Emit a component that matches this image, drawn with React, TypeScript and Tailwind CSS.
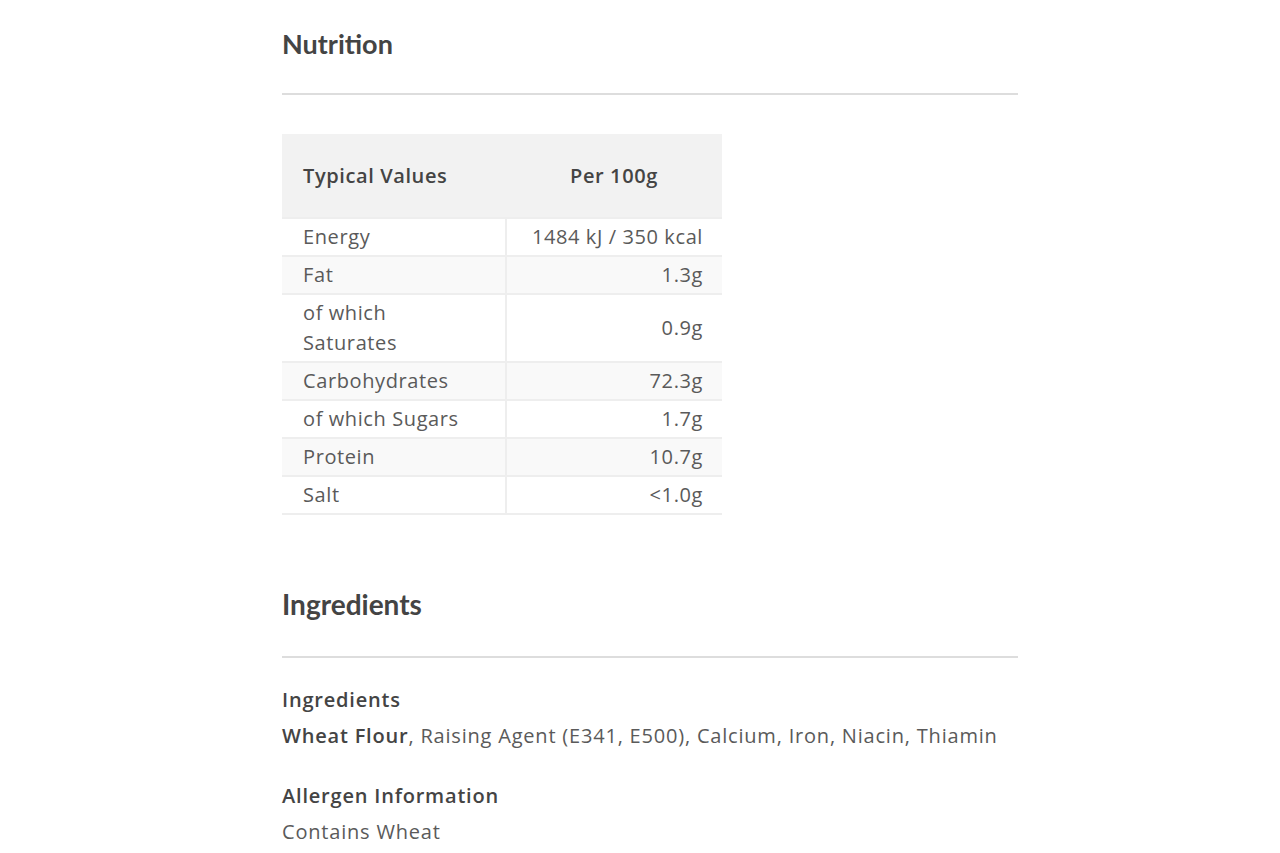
import React from "react";

const rows: { label: React.ReactNode; value: string; shade: boolean }[] = [
  { label: "Energy", value: "1484 kJ / 350 kcal", shade: false },
  { label: "Fat", value: "1.3g", shade: true },
  { label: <>of which<br />Saturates</>, value: "0.9g", shade: false },
  { label: "Carbohydrates", value: "72.3g", shade: true },
  { label: "of which Sugars", value: "1.7g", shade: false },
  { label: "Protein", value: "10.7g", shade: true },
  { label: "Salt", value: "<1.0g", shade: false },
];

export default function App() {
  return (
    <div className="min-h-[853px] bg-white">
      <div className="ml-[282px] w-[736px] pt-[26px]">
        <h2 className="font-['Lato',sans-serif] text-[27px] font-bold leading-[36px] text-[#444]">Nutrition</h2>
        <div className="mt-[31px] h-[2px] bg-[#dddddd]" />
        <table className="mt-[39px] w-[440px] table-fixed border-collapse font-['Open_Sans',sans-serif] text-[20px] tracking-[0.6px] text-[#5a5a5a]">
          <thead>
            <tr className="bg-[#f2f2f2]">
              <th className="h-[84px] w-[224px] pl-[21px] text-left text-[20px] font-semibold text-[#444]">Typical Values</th>
              <th className="text-center text-[20px] font-semibold text-[#444]">Per 100g</th>
            </tr>
          </thead>
          <tbody>
            {rows.map((r, i) => (
              <tr key={i} className={r.shade ? "bg-[#f9f9f9]" : "bg-white"}>
                <td className="whitespace-nowrap border-y-2 border-r-2 border-[#eeeeee] py-[3px] pl-[21px] leading-[30px]">{r.label}</td>
                <td className="whitespace-nowrap border-y-2 border-[#eeeeee] py-[3px] pr-[19px] text-right leading-[30px]">{r.value}</td>
              </tr>
            ))}
          </tbody>
        </table>
        <h2 className="mt-[71px] font-['Lato',sans-serif] text-[28px] font-bold leading-[36px] text-[#444]">Ingredients</h2>
        <div className="mt-[34px] h-[2px] bg-[#dddddd]" />
        <div className="mt-[24px] font-['Open_Sans',sans-serif] text-[20px] leading-[36px] tracking-[0.8px] text-[#5a5a5a]">
          <div className="font-semibold text-[#444]">Ingredients</div>
          <div>
            <span className="font-semibold text-[#444]">Wheat Flour</span>, Raising Agent (E341, E500), Calcium, Iron, Niacin, Thiamin
          </div>
          <div className="mt-[24px] font-semibold text-[#444]">Allergen Information</div>
          <div>Contains Wheat</div>
        </div>
      </div>
    </div>
  );
}
